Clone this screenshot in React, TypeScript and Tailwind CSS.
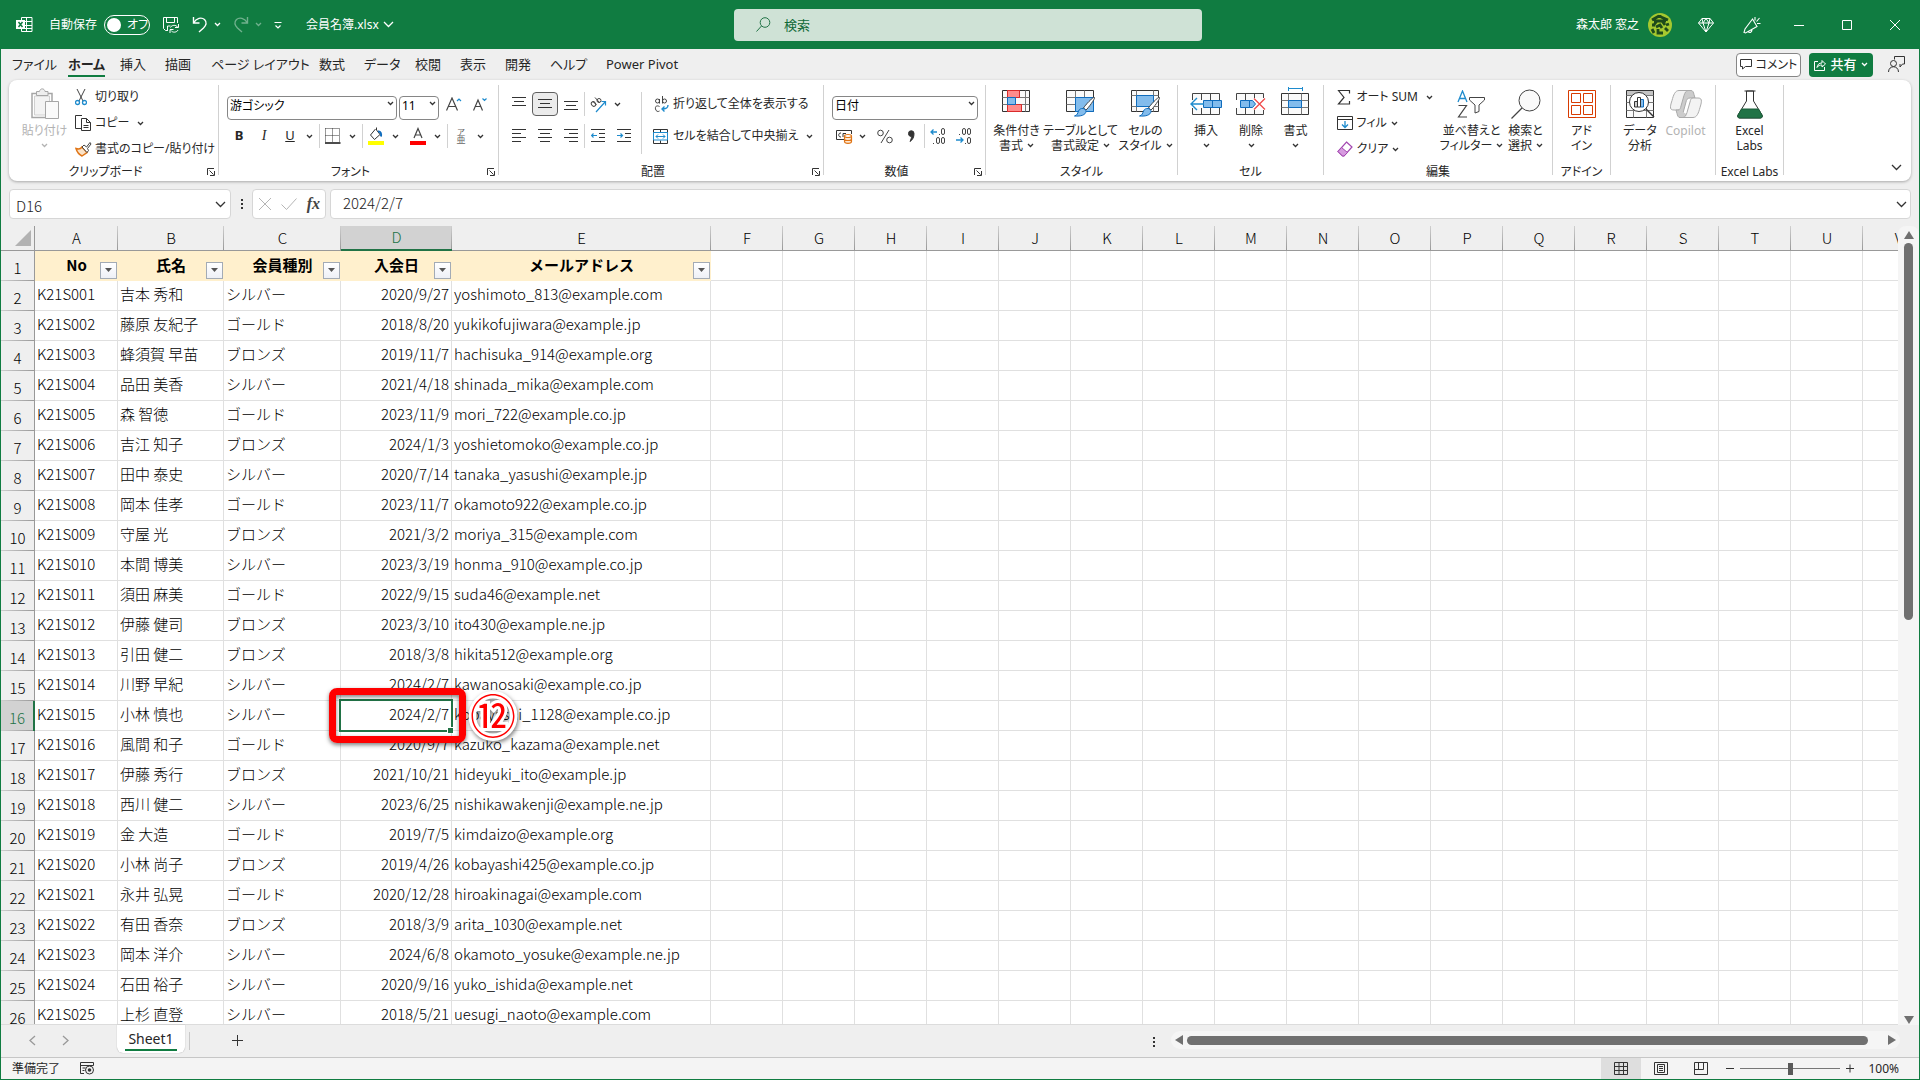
import type { ReactNode } from 'react'
import clsx from 'clsx'

interface Member {
  no: string
  name: string
  rank: string
  date: string
  mail: string
}

const members: Member[] = [
  { no: 'K21S001', name: '吉本 秀和', rank: 'シルバー', date: '2020/9/27', mail: 'yoshimoto_813@example.com' },
  { no: 'K21S002', name: '藤原 友紀子', rank: 'ゴールド', date: '2018/8/20', mail: 'yukikofujiwara@example.jp' },
  { no: 'K21S003', name: '蜂須賀 早苗', rank: 'ブロンズ', date: '2019/11/7', mail: 'hachisuka_914@example.org' },
  { no: 'K21S004', name: '品田 美香', rank: 'シルバー', date: '2021/4/18', mail: 'shinada_mika@example.com' },
  { no: 'K21S005', name: '森 智徳', rank: 'ゴールド', date: '2023/11/9', mail: 'mori_722@example.co.jp' },
  { no: 'K21S006', name: '吉江 知子', rank: 'ブロンズ', date: '2024/1/3', mail: 'yoshietomoko@example.co.jp' },
  { no: 'K21S007', name: '田中 泰史', rank: 'シルバー', date: '2020/7/14', mail: 'tanaka_yasushi@example.jp' },
  { no: 'K21S008', name: '岡本 佳孝', rank: 'ゴールド', date: '2023/11/7', mail: 'okamoto922@example.co.jp' },
  { no: 'K21S009', name: '守屋 光', rank: 'ブロンズ', date: '2021/3/2', mail: 'moriya_315@example.com' },
  { no: 'K21S010', name: '本間 博美', rank: 'シルバー', date: '2023/3/19', mail: 'honma_910@example.co.jp' },
  { no: 'K21S011', name: '須田 麻美', rank: 'ゴールド', date: '2022/9/15', mail: 'suda46@example.net' },
  { no: 'K21S012', name: '伊藤 健司', rank: 'ブロンズ', date: '2023/3/10', mail: 'ito430@example.ne.jp' },
  { no: 'K21S013', name: '引田 健二', rank: 'ブロンズ', date: '2018/3/8', mail: 'hikita512@example.org' },
  { no: 'K21S014', name: '川野 早紀', rank: 'シルバー', date: '2024/2/7', mail: 'kawanosaki@example.co.jp' },
  { no: 'K21S015', name: '小林 慎也', rank: 'シルバー', date: '2024/2/7', mail: 'kobayashi_1128@example.co.jp' },
  { no: 'K21S016', name: '風間 和子', rank: 'ゴールド', date: '2020/9/7', mail: 'kazuko_kazama@example.net' },
  { no: 'K21S017', name: '伊藤 秀行', rank: 'ブロンズ', date: '2021/10/21', mail: 'hideyuki_ito@example.jp' },
  { no: 'K21S018', name: '西川 健二', rank: 'シルバー', date: '2023/6/25', mail: 'nishikawakenji@example.ne.jp' },
  { no: 'K21S019', name: '金 大造', rank: 'ゴールド', date: '2019/7/5', mail: 'kimdaizo@example.org' },
  { no: 'K21S020', name: '小林 尚子', rank: 'ブロンズ', date: '2019/4/26', mail: 'kobayashi425@example.co.jp' },
  { no: 'K21S021', name: '永井 弘晃', rank: 'ゴールド', date: '2020/12/28', mail: 'hiroakinagai@example.com' },
  { no: 'K21S022', name: '有田 香奈', rank: 'ブロンズ', date: '2018/3/9', mail: 'arita_1030@example.net' },
  { no: 'K21S023', name: '岡本 洋介', rank: 'シルバー', date: '2024/6/8', mail: 'okamoto_yosuke@example.ne.jp' },
  { no: 'K21S024', name: '石田 裕子', rank: 'シルバー', date: '2020/9/16', mail: 'yuko_ishida@example.net' },
  { no: 'K21S025', name: '上杉 直登', rank: 'シルバー', date: '2018/5/21', mail: 'uesugi_naoto@example.com' },
]

const headers = ['No', '氏名', '会員種別', '入会日', 'メールアドレス']
const dataColumns = [
  { letter: 'A', width: 'w-[83px]' },
  { letter: 'B', width: 'w-[106px]' },
  { letter: 'C', width: 'w-[117px]' },
  { letter: 'D', width: 'w-[111px]' },
  { letter: 'E', width: 'w-[259px]' },
]
const emptyColumns = 'FGHIJKLMNOPQRSTUV'.split('')

const tabs = [
  { label: 'ファイル', width: 'w-[56px]' },
  { label: 'ホーム', width: 'w-[52px]' },
  { label: '挿入', width: 'w-[45px]' },
  { label: '描画', width: 'w-[46px]' },
  { label: 'ページ レイアウト', width: 'w-[108px]' },
  { label: '数式', width: 'w-[45px]' },
  { label: 'データ', width: 'w-[51px]' },
  { label: '校閲', width: 'w-[45px]' },
  { label: '表示', width: 'w-[45px]' },
  { label: '開発', width: 'w-[45px]' },
  { label: 'ヘルプ', width: 'w-[56px]' },
  { label: 'Power Pivot', width: 'w-[100px]' },
]

const sheetFont = "font-['Noto_Sans_CJK_JP',sans-serif] [font-feature-settings:normal]"

interface SvgProps {
  w: number
  h: number
  className?: string
  children: ReactNode
}

function Svg({ w, h, className, children }: SvgProps) {
  return (
    <svg width={w} height={h} viewBox={`0 0 ${w} ${h}`} fill="none" stroke="#444" className={clsx('shrink-0', className)} aria-hidden="true">
      {children}
    </svg>
  )
}

function Chevron({ color = '#333' }: { color?: string }) {
  return (
    <Svg w={7} h={5}>
      <path d="M1 1l2.5 2.5L6 1" stroke={color} strokeWidth="1.3" />
    </Svg>
  )
}

function WideChevron({ color = '#333' }: { color?: string }) {
  return (
    <Svg w={11} h={7}>
      <path d="M1 1l4.5 4.5L10 1" stroke={color} strokeWidth="1.3" />
    </Svg>
  )
}

function Separator({ tall = false }: { tall?: boolean }) {
  return <span className={clsx('w-px shrink-0 bg-[#d1d1d1]', tall ? 'h-[62px]' : 'h-6')} />
}

function ToolButton({ label, wide = 'w-[26px]', active, children }: { label: string; wide?: string; active?: boolean; children: ReactNode }) {
  return (
    <button
      type="button"
      aria-label={label}
      className={clsx('flex h-6 shrink-0 items-center justify-center', wide, active && 'rounded border border-[#5f5f5f] bg-[#ebebeb]')}
    >
      {children}
    </button>
  )
}

function MenuArrow({ label }: { label: string }) {
  return (
    <ToolButton label={label} wide="w-3">
      <Chevron />
    </ToolButton>
  )
}

function Combo({ label, value, width }: { label: string; value: string; width: string }) {
  return (
    <div className={clsx('relative h-6', width)}>
      <select aria-label={label} className="h-6 w-full appearance-none rounded border border-[#868686] bg-white pb-1 pl-[2px] text-xs text-black">
        <option>{value}</option>
      </select>
      <span className="pointer-events-none absolute top-[9px] right-[3px]">
        <Chevron />
      </span>
    </div>
  )
}

function Group({ title, width, launcher, children }: { title: string; width: string; launcher?: boolean; children: ReactNode }) {
  return (
    <section className={clsx('flex h-[90px] shrink-0 flex-col border-r border-[#d1d1d1]', width)} aria-label={title}>
      <div className="flex h-[79px] shrink-0 justify-center">{children}</div>
      <div className="flex h-4 shrink-0 items-center text-xs leading-4 whitespace-nowrap">
        <span className="flex flex-1 justify-center">{title}</span>
        {launcher && (
          <button type="button" aria-label={`${title}の設定`} className="flex w-4 justify-end pr-[3px]">
            <Svg w={8} h={8}>
              <path d="M.5 7V.5H7M2.500 2.500L6.500 6.500M7.500 3v4.500H3" stroke="#333" />
            </Svg>
          </button>
        )}
      </div>
    </section>
  )
}

function BigButton({ icon, lines, arrow, width, muted }: { icon: ReactNode; lines: string[]; arrow?: boolean; width: string; muted?: boolean }) {
  return (
    <button type="button" className={clsx('flex shrink-0 flex-col items-center text-xs leading-[15px] whitespace-nowrap', width, muted && 'text-[#b3b3b3]')}>
      <span className="flex h-[38px] items-center">{icon}</span>
      {lines.map((line, i) => (
        <span key={line} className="flex items-center gap-1">
          {line}
          {arrow && lines.length > 1 && i === lines.length - 1 && <Chevron />}
        </span>
      ))}
      {arrow && lines.length === 1 && (
        <span className="flex h-[15px] items-center">
          <Chevron color={muted ? '#b3b3b3' : '#333'} />
        </span>
      )}
    </button>
  )
}

function ListButton({ icon, text, arrow, spread }: { icon: ReactNode; text: string; arrow?: boolean; spread?: boolean }) {
  return (
    <button type="button" className="flex h-[26px] items-center whitespace-nowrap">
      <span className="flex w-5 items-center">{icon}</span>
      {text}
      {arrow && (
        <span className={spread ? 'pl-2' : 'pl-1'}>
          <Chevron />
        </span>
      )}
    </button>
  )
}

function LinesIcon({ rows, blueArrow }: { rows: number[][]; blueArrow?: 'left' | 'right' }) {
  return (
    <Svg w={14} h={14}>
      {rows.map(([x1, x2, y]) => (
        <path key={y} d={`M${x1} ${y}.5H${x2}`} stroke="#333" />
      ))}
      {blueArrow === 'left' && <path d="M6 6.500H.5M2.500 4.500l-2 2 2 2" stroke="#1e8bcd" strokeWidth="1.2" />}
      {blueArrow === 'right' && <path d="M0 6.500H5.500M3.500 4.500l2 2-2 2" stroke="#1e8bcd" strokeWidth="1.2" />}
    </Svg>
  )
}

function Brush() {
  return (
    <g>
      <path d="M29.500 8.500c1 .8-6.500 11-8.500 12.500l-2.500-2c1.500-2.500 9.500-11.500 11-10.500z" fill="#fff" stroke="#444" />
      <path d="M18 19.500c1.500 0 3 1.500 3 3-.5 3.500-5 5-11.500 4.500 3-1 3-2.500 4-5 .8-1.800 2.500-2.700 4.500-2.500z" fill="#83bcec" stroke="#0f6cbd" />
    </g>
  )
}

function TableIcon({ children }: { children?: ReactNode }) {
  return (
    <Svg w={32} h={30}>
      <path d="M1.500 1.500h27v21h-27z" fill="#fafafa" stroke="#333" />
      {children}
    </Svg>
  )
}

function TitleBar() {
  return (
    <header className="flex h-[49px] shrink-0 items-center bg-[#107c41] pl-4 text-xs text-white">
      <div className="flex flex-1 items-center">
        <Svg w={17} h={17}>
          <path d="M5.500 1.500h10.500v14H5.500M10.500 1v15M5.500 5.500H16M5.500 9.500H16M5.500 12.500H16M5.500 1.500v14" stroke="#fff" />
          <path d="M0 4h9v9H0z" fill="#fff" stroke="none" />
          <path d="M2.500 6l4 5M6.500 6l-4 5" stroke="#107c41" strokeWidth="1.5" />
        </Svg>
        <label className="ml-4 flex items-center gap-[7px]">
          自動保存
          <input type="checkbox" role="switch" className="sr-only" />
          <span className="flex h-5 w-[46px] items-center rounded-full border border-white">
            <span className="ml-[2px] size-[14px] rounded-full bg-white" />
            <span className="ml-[6px]">オフ</span>
          </span>
        </label>
        <button type="button" aria-label="上書き保存" className="ml-3">
          <Svg w={18} h={18}>
            <path d="M6 14.500H3.500l-2-2v-11h14V7M4.500 1.500v5h8v-5M5.500 14v-4h3" stroke="#fff" />
            <path d="M8.500 11.500c1-2.500 5.500-3 7-.5M16.500 8v3.500H13M16 14c-1 2.500-5.500 3-7 .5M8 17v-3.500h3.500" stroke="#fff" />
          </Svg>
        </button>
        <button type="button" aria-label="元に戻す" className="ml-3 flex items-center gap-[6px]">
          <Svg w={16} h={17}>
            <path d="M1.500 1v6h6M1.500 7c3-5 8-6 11-3.500 3 3 1.500 6-1 8.500L7 16" stroke="#fff" strokeWidth="1.4" />
          </Svg>
          <Chevron color="#fff" />
        </button>
        <button type="button" aria-label="やり直し" disabled className="ml-3 flex items-center gap-[6px] opacity-40">
          <Svg w={16} h={17}>
            <path d="M14.500 1v6h-6M14.500 7c-3-5-8-6-11-3.500-3 3-1.500 6 1 8.500L9 16" stroke="#fff" strokeWidth="1.4" />
          </Svg>
          <Chevron color="#fff" />
        </button>
        <button type="button" aria-label="クイック アクセス ツール バーのカスタマイズ" className="ml-3">
          <Svg w={8} h={8}>
            <path d="M.5 1.500h7M1.500 4.500L4 7l2.500-2.500" stroke="#fff" strokeWidth="1.2" />
          </Svg>
        </button>
        <button type="button" className="ml-6 flex items-center gap-1">
          会員名簿.xlsx
          <WideChevron color="#fff" />
        </button>
      </div>
      <div className="flex h-8 w-[468px] items-center gap-[13px] rounded bg-[#cfe2d6] pl-[22px]">
        <Svg w={15} h={15}>
          <circle cx="9" cy="5.500" r="4.800" stroke="#217346" />
          <path d="M5.500 9L.5 14.500" stroke="#217346" />
        </Svg>
        <input type="text" aria-label="検索" placeholder="検索" className="h-8 flex-1 bg-transparent text-[13px] outline-none placeholder:text-[#0f6a38]" />
      </div>
      <div className="flex flex-1 items-center justify-end">
        <button type="button" className="flex items-center gap-[9px]">
          森太郎 窓之
          <Svg w={24} h={24}>
            <circle cx="12" cy="12" r="12" fill="#a5c82f" stroke="none" />
            <path d="M4 7l7-4M12 2v3M6 8h12M13 4l7 3M9 8l-4 5M14 8l3 4M8 14l4-2 2 3M4 16l2 4M10 16v4h5M17 15l3 3M18 12l3-1M4 12h3" stroke="#1d4a1b" strokeWidth="2.800" />
          </Svg>
        </button>
        <button type="button" aria-label="プレミアム" className="ml-[26px]">
          <Svg w={16} h={16}>
            <path d="M4 1.500h8L15.500 6 8 15 .5 6zM.5 6h15M5 6l3 9 3-9M4 1.500L5 6l3-4.500L11 6l1-4.500" stroke="#fff" />
          </Svg>
        </button>
        <button type="button" aria-label="新機能" className="ml-[29px]">
          <Svg w={18} h={18}>
            <path d="M9.500 3L2 13l-1 3.500 1.500.5L14 10.500zM5 15.500c2 2 4 .5 4-2M12 4.500V1M13.500 5.500L16.500 2M14 7.500h3.500" stroke="#fff" strokeWidth="1.1" />
          </Svg>
        </button>
        <button type="button" aria-label="最小化" className="ml-[14px] flex w-12 justify-center">
          <Svg w={10} h={10}>
            <path d="M0 5.500h10" stroke="#fff" />
          </Svg>
        </button>
        <button type="button" aria-label="最大化" className="flex w-12 justify-center">
          <Svg w={10} h={10}>
            <path d="M.5.5h9v9h-9z" stroke="#fff" />
          </Svg>
        </button>
        <button type="button" aria-label="閉じる" className="mr-px flex w-12 justify-center">
          <Svg w={10} h={10}>
            <path d="M0 0l10 10M10 0L0 10" stroke="#fff" />
          </Svg>
        </button>
      </div>
    </header>
  )
}

function TabRow() {
  return (
    <nav className="flex h-[31px] shrink-0 items-center justify-between pr-[14px] pl-[11px] text-[13px]">
      <div className="flex">
        {tabs.map(tab => (
          <button key={tab.label} type="button" className={clsx('flex shrink-0 whitespace-nowrap', tab.width)}>
            <span className={clsx('border-b-2 leading-[22px]', tab.label === 'ホーム' ? 'border-[#107c41] font-bold' : 'border-transparent')}>{tab.label}</span>
          </button>
        ))}
      </div>
      <div className="flex items-center">
        <button type="button" className="flex h-6 w-[65px] items-center justify-center gap-1 rounded border border-[#868686] bg-white text-xs">
          <Svg w={12} h={11}>
            <path d="M.5.500h11v7h-6l-3 2.500v-2.500h-2z" stroke="#333" />
          </Svg>
          コメント
        </button>
        <button type="button" className="ml-2 flex h-6 w-16 items-center justify-center gap-1 rounded bg-[#107c41] font-medium text-white">
          <Svg w={12} h={12}>
            <path d="M4 2.500H.5v9h10V8M3 8.500c.5-3 2-4.500 5-4.500V1.500L11.500 5 8 8V6c-2 0-4 .5-5 2.500z" stroke="#fff" />
          </Svg>
          共有
          <Chevron color="#fff" />
        </button>
        <button type="button" aria-label="プロフィール" className="ml-[15px]">
          <Svg w={17} h={17}>
            <path d="M6.500 3.500V.5h10v7.500h-2l-2.500 3V8" stroke="#333" />
            <circle cx="5.500" cy="7.500" r="3" stroke="#333" />
            <path d="M.5 16c0-7 10-7 10 0" stroke="#333" />
          </Svg>
        </button>
      </div>
    </nav>
  )
}

function ClipboardGroup() {
  return (
    <Group title="クリップボード" width="w-[210px]" launcher>
      <div className="flex flex-1 gap-2 pl-[13px]">
        <BigButton
          width="w-[45px]"
          lines={['貼り付け']}
          arrow
          muted
          icon={
            <Svg w={28} h={32}>
              <path d="M1 5.500h20v24H1z" fill="#fff" stroke="#a6a6a6" strokeWidth="1.500" />
              <path d="M3.500 8h15v19h-15z" fill="#f3f3f3" stroke="#d0d0d0" />
              <path d="M5.500 7.500v-4h3c.5-3.500 5-3.500 5.500 0h3v4z" fill="#eee" stroke="#a6a6a6" />
              <path d="M14.500 13.500h13v17h-13z" fill="#fafafa" stroke="#a6a6a6" />
            </Svg>
          }
        />
        <div className="-mt-px flex flex-col items-start text-xs">
          <ListButton
            text="切り取り"
            icon={
              <Svg w={12} h={17}>
                <path d="M2 0l6 12M10 0L4 12" stroke="#444" />
                <circle cx="2.500" cy="13.500" r="2" stroke="#1e8bcd" strokeWidth="1.300" />
                <circle cx="9.500" cy="13.500" r="2" stroke="#1e8bcd" strokeWidth="1.300" />
              </Svg>
            }
          />
          <ListButton
            text="コピー"
            arrow
            spread
            icon={
              <Svg w={16} h={16}>
                <path d="M6 13.500H.5v-13H7M6.500 3.500h5l4 4v8h-9zM11.500 3.500v4h4M8.500 10.500h5M8.500 12.500h5" stroke="#333" />
              </Svg>
            }
          />
          <ListButton
            text="書式のコピー/貼り付け"
            icon={
              <Svg w={17} h={16}>
                <path d="M1 7.500c3 1 5 0 6-1.500l5 5.500-5 3.500c-3-1.500-5-4-6-7.500z" fill="#fbe3c8" stroke="#e07516" strokeWidth="1.500" />
                <path d="M7 6l2-2 2.500 2L15 1.500 16 3l-3.500 4.500 1 2-1.500 2z" fill="#fff" stroke="#444" />
              </Svg>
            }
          />
        </div>
      </div>
    </Group>
  )
}

function FontGroup() {
  return (
    <Group title="フォント" width="w-[280px]" launcher>
      <div className="flex flex-1 flex-col gap-2 pt-[7px] pl-2">
        <div className="flex items-center">
          <Combo label="フォント" value="游ゴシック" width="w-[170px]" />
          <span className="w-[2px]" />
          <Combo label="フォント サイズ" value="11" width="w-[40px]" />
          <span className="w-[2px]" />
          <ToolButton label="フォント サイズの拡大">
            <Svg w={17} h={15}>
              <path d="M.5 13.500L6 1l5.500 12.500M2.500 9.500h7" strokeWidth="1.200" />
              <path d="M11 4l2-2 2 2" stroke="#1e8bcd" strokeWidth="1.200" />
            </Svg>
          </ToolButton>
          <ToolButton label="フォント サイズの縮小">
            <Svg w={15} h={15}>
              <path d="M.5 13.500L5 3l4.500 10.500M2 9.500h6" strokeWidth="1.200" />
              <path d="M9.500 1.500l2 2 2-2" stroke="#1e8bcd" strokeWidth="1.200" />
            </Svg>
          </ToolButton>
        </div>
        <div className="flex items-center text-[13px]">
          <ToolButton label="太字" wide="w-6">
            <b>B</b>
          </ToolButton>
          <ToolButton label="斜体">
            <i className="font-['Liberation_Serif',serif] text-sm">I</i>
          </ToolButton>
          <ToolButton label="下線">
            <u>U</u>
          </ToolButton>
          <MenuArrow label="下線の種類" />
          <span className="w-1" />
          <Separator />
          <ToolButton label="罫線">
            <Svg w={16} h={16}>
              <path d="M.5.5h14v14M.5.500v14M7.500.500v14M.5 7.500h14" stroke="#333" strokeDasharray="1 1" />
              <path d="M0 15h15.500" stroke="#111" strokeWidth="1.500" />
            </Svg>
          </ToolButton>
          <MenuArrow label="罫線の種類" />
          <span className="w-1" />
          <Separator />
          <ToolButton label="塗りつぶしの色">
            <Svg w={16} h={18}>
              <path d="M7.500 2L2.500 8l4 4.500 5.500-5-3.500-4.500v-2.500" stroke="#333" />
              <path d="M10 4.500c2.500-.5 3.500 2 3 5" stroke="#0f6cbd" strokeWidth="2" />
              <path d="M0 14h16v4H0z" fill="#ff0" stroke="none" />
            </Svg>
          </ToolButton>
          <MenuArrow label="塗りつぶしの色の選択" />
          <span className="w-1" />
          <ToolButton label="フォントの色">
            <Svg w={16} h={18}>
              <path d="M4 11L8 1.500 12 11M5.500 8h5" strokeWidth="1.200" />
              <path d="M0 14h16v4H0z" fill="#f00" stroke="none" />
            </Svg>
          </ToolButton>
          <MenuArrow label="フォントの色の選択" />
          <span className="w-1" />
          <Separator />
          <ToolButton label="ふりがな">
            <span className="flex flex-col items-center text-[8px] leading-[8px] text-[#666]">
              <span>ア</span>
              <span className="text-[9px]">亜</span>
            </span>
          </ToolButton>
          <MenuArrow label="ふりがなの設定" />
        </div>
      </div>
    </Group>
  )
}

function AlignGroup() {
  return (
    <Group title="配置" width="w-[325px]" launcher>
      <div className="flex flex-1 items-start pt-[7px] pl-[7px] text-xs">
        <div className="flex flex-col gap-2">
          <div className="flex items-center">
            <ToolButton label="上揃え">
              <LinesIcon rows={[[0, 14, 0], [2, 12, 4], [0, 14, 8]]} />
            </ToolButton>
            <ToolButton label="上下中央揃え" active>
              <LinesIcon rows={[[0, 14, 2], [2, 12, 6], [0, 14, 10]]} />
            </ToolButton>
            <ToolButton label="下揃え">
              <LinesIcon rows={[[0, 14, 4], [2, 12, 8], [0, 14, 12]]} />
            </ToolButton>
            <Separator />
            <ToolButton label="方向">
              <Svg w={17} h={17}>
                <ellipse cx="3.500" cy="8" rx="2" ry="2.400" transform="rotate(-40 3.500 8)" />
                <path d="M3 5.500l3.500 3.500M5 1.500l4.500 5" />
                <circle cx="9" cy="4.500" r="2" />
                <path d="M6 16l9.500-10.500M11.500 5.500h4v4" stroke="#1e8bcd" strokeWidth="1.200" />
              </Svg>
            </ToolButton>
            <MenuArrow label="方向の種類" />
          </div>
          <div className="flex items-center">
            <ToolButton label="左揃え">
              <LinesIcon rows={[[0, 14, 0], [0, 9, 4], [0, 14, 8], [0, 9, 12]]} />
            </ToolButton>
            <ToolButton label="中央揃え">
              <LinesIcon rows={[[0, 14, 0], [2, 12, 4], [0, 14, 8], [2, 12, 12]]} />
            </ToolButton>
            <ToolButton label="右揃え">
              <LinesIcon rows={[[0, 14, 0], [5, 14, 4], [0, 14, 8], [5, 14, 12]]} />
            </ToolButton>
            <Separator />
            <ToolButton label="インデントを減らす">
              <LinesIcon rows={[[0, 14, 0], [8, 14, 4], [8, 14, 8], [0, 14, 12]]} blueArrow="left" />
            </ToolButton>
            <ToolButton label="インデントを増やす">
              <LinesIcon rows={[[0, 14, 0], [8, 14, 4], [8, 14, 8], [0, 14, 12]]} blueArrow="right" />
            </ToolButton>
          </div>
        </div>
        <span className="w-1" />
        <Separator tall />
        <div className="-mt-px flex flex-col gap-[6px] pl-[11px]">
          <ListButton
            text="折り返して全体を表示する"
            icon={
              <Svg w={17} h={17}>
                <circle cx="4.500" cy="5" r="2" />
                <path d="M6.500 3v4.500M9.500 0v7.500" />
                <circle cx="11.500" cy="5" r="2" />
                <path d="M6.500 10.500c-3-1.500-4.500 0-4 2.500.5 2.500 2.500 3 4 2" />
                <path d="M15 9c0 3-1.500 4-6 4M11.500 10.500L9 13l2.500 2.500" stroke="#1e8bcd" strokeWidth="1.400" />
              </Svg>
            }
          />
          <ListButton
            text="セルを結合して中央揃え"
            arrow
            spread
            icon={
              <Svg w={15} h={15}>
                <path d="M.5.500h14v14H.5zM7.500.500v3M7.500 11.500v3" stroke="#333" />
                <path d="M.5 3.500h14v7.500H.5z" fill="#fff" stroke="#1e8bcd" />
                <path d="M3 7.500h9M5 5.500l-2 2 2 2M10 5.500l2 2-2 2" stroke="#1e8bcd" />
              </Svg>
            }
          />
        </div>
      </div>
    </Group>
  )
}

function NumberGroup() {
  return (
    <Group title="数値" width="w-[162px]" launcher>
      <div className="flex flex-1 flex-col gap-2 pt-[7px] pl-2">
        <Combo label="表示形式" value="日付" width="w-[146px]" />
        <div className="flex items-center">
          <ToolButton label="通貨表示形式" wide="w-6">
            <Svg w={17} h={15}>
              <path d="M8 10.500H.5v-9h15V5M5 4c-3-.5-3 4.500 0 4M7 8V4.500h3" stroke="#333" />
              <path d="M8.500 7.500v5c0 2.500 7 2.500 7 0v-5M8.500 10c0 2 7 2 7 0" stroke="#e07516" strokeWidth="1.200" fill="#fde8d3" />
              <ellipse cx="12" cy="7" rx="3.500" ry="1.500" fill="#fff" stroke="#e07516" strokeWidth="1.200" />
            </Svg>
          </ToolButton>
          <MenuArrow label="通貨の種類" />
          <span className="w-1" />
          <ToolButton label="パーセント スタイル">
            <Svg w={16} h={15}>
              <circle cx="3.500" cy="4" r="2.800" />
              <circle cx="12.500" cy="11" r="2.800" />
              <path d="M12 1L4 14" />
            </Svg>
          </ToolButton>
          <ToolButton label="桁区切りスタイル">
            <Svg w={9} h={13}>
              <path d="M1.500 3.500a2.700 2.700 0 015.500 0c0 3.500-1 6-4 8 1-2 1.500-3.500 1.500-5a2.700 2.700 0 01-3-3z" fill="#333" stroke="#333" />
            </Svg>
          </ToolButton>
          <Separator />
          <ToolButton label="小数点以下の表示桁数を増やす">
            <Svg w={16} h={16}>
              <path d="M7 4H1M3.500 1.500L1 4l2.500 2.500" stroke="#1e8bcd" strokeWidth="1.300" />
              <rect x="11.500" y=".5" width="3" height="6" rx="1.500" />
              <rect x="6.500" y="9.500" width="3" height="6" rx="1.500" />
              <rect x="11.500" y="9.500" width="3" height="6" rx="1.500" />
              <path d="M9.500 6v1M3.500 15v1" />
            </Svg>
          </ToolButton>
          <ToolButton label="小数点以下の表示桁数を減らす">
            <Svg w={16} h={16}>
              <path d="M0 12h7M4.500 9.500L7 12l-2.500 2.500" stroke="#1e8bcd" strokeWidth="1.300" />
              <rect x="6.500" y=".5" width="3" height="6" rx="1.500" />
              <rect x="11.500" y=".5" width="3" height="6" rx="1.500" />
              <rect x="11.500" y="9.500" width="3" height="6" rx="1.500" />
              <path d="M3.500 6v1M9.500 15v1" />
            </Svg>
          </ToolButton>
        </div>
      </div>
    </Group>
  )
}

function StyleGroup() {
  return (
    <Group title="スタイル" width="w-[192px]">
      <BigButton
        width="w-[52px]"
        lines={['条件付き', '書式']}
        arrow
        icon={
          <TableIcon>
            <path d="M1.500 8.500h27M1.500 15.500h27M6.500 1.500v21M24.500 1.500v21" stroke="#777" />
            <path d="M6.500 1.500h12v7h-12zM6.500 15.500h14v7h-14z" fill="#ff8c8c" stroke="#d92b2b" />
            <path d="M6.500 8.500h8v7h-8z" fill="#83bcec" stroke="#0f6cbd" />
          </TableIcon>
        }
      />
      <BigButton
        width="w-[76px]"
        lines={['テーブルとして', '書式設定']}
        arrow
        icon={
          <TableIcon>
            <path d="M1.500 8.500h27M1.500 15.500h27M10.500 1.500v21M19.500 1.500v21" stroke="#777" />
            <path d="M10.500 8.500h18v14h-18z" fill="#83bcec" stroke="#0f6cbd" />
            <Brush />
          </TableIcon>
        }
      />
      <BigButton
        width="w-[54px]"
        lines={['セルの', 'スタイル']}
        arrow
        icon={
          <TableIcon>
            <path d="M1.500 6.500h27M1.500 17.500h27M6.500 1.500v21M23.500 1.500v21" stroke="#777" />
            <path d="M6.500 6.500h17v11h-17z" fill="#83bcec" stroke="#0f6cbd" />
            <Brush />
          </TableIcon>
        }
      />
    </Group>
  )
}

function CellGroup() {
  return (
    <Group title="セル" width="w-[146px]">
      <BigButton
        width="w-[45px]"
        lines={['挿入']}
        arrow
        icon={
          <Svg w={33} h={24}>
            <path d="M2.500 1.500h27v21h-27zM11.500 1.500v21M20.500 1.500v21" fill="#fafafa" stroke="#444" />
            <path d="M0 8h14v8H0z" fill="#fff" stroke="none" />
            <path d="M13.500 8.500h18v7h-18zM22.500 8.500v7" fill="#83bcec" stroke="#0f6cbd" />
            <path d="M14 12H1M7 6l-6 6 6 6" stroke="#1e8bcd" strokeWidth="1.400" />
          </Svg>
        }
      />
      <BigButton
        width="w-[45px]"
        lines={['削除']}
        arrow
        icon={
          <Svg w={32} h={24}>
            <path d="M1.500 1.500h27v21h-27zM10.500 1.500v21M19.500 1.500v21" fill="#fafafa" stroke="#444" />
            <path d="M0 8h5v8H0zM19 6h13v12H19z" fill="#fff" stroke="none" />
            <path d="M5.500 8.500h9v7h-9zM14.500 8.500h3l3 3.500-3 3.500h-3z" fill="#83bcec" stroke="#0f6cbd" />
            <path d="M19 6.500l11 11M30 6.500l-11 11" stroke="#f04a4a" strokeWidth="1.300" />
          </Svg>
        }
      />
      <BigButton
        width="w-[44px]"
        lines={['書式']}
        arrow
        icon={
          <Svg w={29} h={34}>
            <path d="M7 1.500h15M7.500 0v4M21.500 0v4" stroke="#1e8bcd" />
            <path d="M.5 6.500h27v21H.5z" fill="#fafafa" stroke="#333" />
            <path d="M.5 13.500h27M.5 20.500h27M7.500 6.500v21M20.500 6.500v21" stroke="#777" />
            <path d="M7.500 13.500h13v7h-13z" fill="#83bcec" stroke="#0f6cbd" />
          </Svg>
        }
      />
    </Group>
  )
}

function EditGroup() {
  return (
    <Group title="編集" width="w-[229px]">
      <div className="-mt-px flex w-[117px] flex-col pl-[11px] text-xs">
        <ListButton
          text="オート SUM"
          arrow
          spread
          icon={
            <Svg w={14} h={15}>
              <path d="M12.500 3.500v-3H1.500L7 7.500l-5.500 6.500h11v-3" stroke="#333" strokeWidth="1.200" />
            </Svg>
          }
        />
        <ListButton
          text="フィル"
          arrow
          icon={
            <Svg w={16} h={14}>
              <path d="M.5.500h15v13H.5zM.5 3.500h15" stroke="#333" />
              <path d="M8 5v6.500M5 8.500l3 3 3-3" stroke="#1e8bcd" strokeWidth="1.300" />
            </Svg>
          }
        />
        <ListButton
          text="クリア"
          arrow
          icon={
            <Svg w={16} h={16}>
              <path d="M9.500 1l5.500 5-8 9H5.500L1 10.500z" fill="#fff" stroke="#a347b0" strokeWidth="1.200" />
              <path d="M4.500 6.500l6 5L7 15H5.500L1 10.500z" fill="#d79be0" stroke="#a347b0" />
            </Svg>
          }
        />
      </div>
      <BigButton
        width="w-[58px]"
        lines={['並べ替えと', 'フィルター']}
        arrow
        icon={
          <Svg w={30} h={28}>
            <path d="M1 12L5.500 1 10 12M2.500 8.500h6" stroke="#1e8bcd" strokeWidth="1.300" />
            <path d="M1.500 15.500h8L1.500 27h8.500" stroke="#444" strokeWidth="1.200" />
            <path d="M12.500 7.500h15v2.500l-5.500 5v6.500l-4 1.500v-8l-5.500-5z" />
          </Svg>
        }
      />
      <BigButton
        width="w-[50px]"
        lines={['検索と', '選択']}
        arrow
        icon={
          <Svg w={30} h={30}>
            <circle cx="18.500" cy="11.500" r="10.500" fill="#fafafa" />
            <path d="M11 19L.5 29.500" strokeWidth="1.200" />
          </Svg>
        }
      />
    </Group>
  )
}

function Ribbon() {
  return (
    <div className="mx-2 flex h-[101px] shrink-0 items-start justify-between rounded-lg bg-white pt-[5px] shadow-[0_1px_3px_rgba(0,0,0,0.3)]">
      <div className="flex">
        <ClipboardGroup />
        <FontGroup />
        <AlignGroup />
        <NumberGroup />
        <StyleGroup />
        <CellGroup />
        <EditGroup />
        <Group title="アドイン" width="w-[58px]">
          <BigButton
            width="w-[50px]"
            lines={['アド', 'イン']}
            icon={
              <Svg w={28} h={28}>
                <path d="M.5.500h27v27H.5zM3.500 3.500h9v9h-9zM15.500 3.500h9v9h-9zM3.500 15.500h9v9h-9zM15.500 15.500h9v9h-9z" stroke="#d83b01" />
              </Svg>
            }
          />
        </Group>
        <Group title="" width="w-[105px]">
          <BigButton
            width="w-[45px]"
            lines={['データ', '分析']}
            icon={
              <Svg w={29} h={29}>
                <path d="M.5.500h27v27H.5z" fill="#fafafa" stroke="#333" />
                <path d="M1 1h26v4H1z" fill="#c4c4c4" stroke="none" />
                <path d="M.5 5.500h27M.5 12.500h27M.5 20.500h27M7.500 5.500v22M20.500 5.500v22" stroke="#777" />
                <circle cx="13" cy="12" r="9.500" fill="#fff" stroke="#333" />
                <path d="M20 19l8 8" stroke="#333" strokeWidth="1.500" />
                <path d="M8.500 11.500h3V17h-3z" fill="#ccc" stroke="#333" />
                <path d="M14.500 9.500h3V17h-3z" fill="#83bcec" stroke="#0f6cbd" />
                <path d="M11.500 7.500h3V17h-3z" fill="#fff" stroke="#333" />
              </Svg>
            }
          />
          <BigButton
            width="w-[46px]"
            lines={['Copilot']}
            muted
            icon={
              <Svg w={32} h={28}>
                <path d="M9 .5h12c2 0 2.500 2 3 4l1 3.500h-5c-3 0-3.500 2-4 4l-3 11c-1 3-2 4.500-4 4.500" fill="#ccc" stroke="#aaa" />
                <path d="M9 .5C5 .5 3.500 5 2 10.500-.500 18 0 20 4 20h4c2 0 2.500-2 3-4l3-10.500c1-3 2-5 4-5z" fill="#f3f3f3" stroke="#aaa" />
                <path d="M23 27.500H10c-2 0-2.500-2-3-4L6 20h3" fill="#ccc" stroke="#aaa" />
                <path d="M23 27.500c4 0 5.500-4.500 7-10C32.500 10 31.500 8 28 8h-5c-2 0-2.500 2-3 4l-3 10.500c-1 3-2 5-4 5z" fill="#f3f3f3" stroke="#aaa" />
              </Svg>
            }
          />
        </Group>
        <Group title="Excel Labs" width="w-[68px]">
          <BigButton
            width="w-[50px]"
            lines={['Excel', 'Labs']}
            icon={
              <Svg w={26} h={29}>
                <path d="M9.500 1v10L1 25c-.8 1.500 0 3 1.500 3h21c1.500 0 2.300-1.500 1.500-3L16.500 11V1z" fill="#fff" stroke="#333" />
                <path d="M4.500 19h17l3.500 6c.8 1.500 0 3-1.500 3h-21C1 28 .2 26.500 1 25z" fill="#217346" stroke="#1d5d3a" />
                <path d="M7.500 1h11" stroke="#333" />
              </Svg>
            }
          />
        </Group>
      </div>
      <button type="button" aria-label="リボンの表示オプション" className="mt-[79px] mr-[9px]">
        <WideChevron />
      </button>
    </div>
  )
}

function FormulaBar() {
  return (
    <div className="flex shrink-0 items-center px-2 pt-2 pb-[7px]">
      <div className="flex h-[30px] w-[222px] items-center rounded border border-[#d6d6d6] bg-white pr-1">
        <input aria-label="名前ボックス" defaultValue="D16" className={clsx('w-0 flex-1 bg-transparent pt-1 pl-[6px] text-[15px] font-light text-[#222] outline-none', sheetFont)} />
        <button type="button" aria-label="名前の一覧">
          <WideChevron />
        </button>
      </div>
      <div className="flex w-[21px] flex-col items-center gap-[2px]">
        <span className="size-[2px] bg-[#333]" />
        <span className="size-[2px] bg-[#333]" />
        <span className="size-[2px] bg-[#333]" />
      </div>
      <div className="flex h-[30px] w-[74px] items-center justify-between rounded border border-[#d6d6d6] bg-white px-[5px]">
        <button type="button" aria-label="キャンセル">
          <Svg w={14} h={14}>
            <path d="M1 1l12 12M13 1L1 13" stroke="#b5b5b5" />
          </Svg>
        </button>
        <button type="button" aria-label="入力">
          <Svg w={16} h={12}>
            <path d="M.5 6.500l5 5L15.500.500" stroke="#b5b5b5" />
          </Svg>
        </button>
        <button type="button" aria-label="関数の挿入" className="font-['Liberation_Serif',serif] text-base leading-5 font-bold text-[#444] italic">
          fx
        </button>
      </div>
      <div className="ml-1 flex h-[30px] flex-1 items-center rounded border border-[#d6d6d6] bg-white pr-[3px]">
        <input aria-label="数式バー" defaultValue="2024/2/7" className={clsx('flex-1 bg-transparent pb-[2px] pl-3 text-[15px] font-light text-[#222] outline-none', sheetFont)} />
        <button type="button" aria-label="数式バーの展開">
          <WideChevron />
        </button>
      </div>
    </div>
  )
}

function FilterButton({ column }: { column: string }) {
  return (
    <button
      type="button"
      aria-label={`${column}のフィルター`}
      className="absolute right-px bottom-[2px] flex size-[17px] items-center justify-center border border-[#a3abb5] bg-linear-to-b from-white to-[#eef0f6]"
    >
      <Svg w={7} h={4}>
        <path d="M0 0h7L3.500 4z" fill="#555" stroke="none" />
      </Svg>
    </button>
  )
}

// Selected cell frame with the red step marker drawn over it
function SelectionMark() {
  return (
    <>
      <span className="pointer-events-none absolute -top-[2px] -right-[2px] -bottom-[2px] -left-[2px] z-10 border-2 border-[#217346]" />
      <span className="pointer-events-none absolute -right-[2px] -bottom-[3px] z-10 size-[6px] border-t border-l border-white bg-[#217346]" />
      <span className="pointer-events-none absolute -top-[13px] -right-[15px] -bottom-[13px] -left-[12px] z-20 rounded-lg border-[7px] border-[#f00] shadow-[0_2px_4px_rgba(0,0,0,0.5),inset_0_2px_4px_rgba(0,0,0,0.5)]" />
      <span className="pointer-events-none absolute top-3 left-full z-20 -translate-y-1/2 pl-[19px] text-[46px] leading-[46px] font-normal text-[#f00] [paint-order:stroke] drop-shadow-[1px_2px_2px_rgba(0,0,0,0.5)] [-webkit-text-stroke:6px_white]">
        ⑫
      </span>
    </>
  )
}

const colHead = 'relative h-6 p-0 text-center font-light'
const colHeadIdle = 'border-b border-[#999] bg-[#efefef]'
const rowHead = 'relative h-[30px] p-0 pt-1 text-center leading-[22px] font-light'
const cell = 'relative h-[30px] border-r border-b border-[#e0e0e0] px-[2px] py-0 leading-[26px] whitespace-nowrap align-top'

function Sheet() {
  return (
    <div className={clsx('min-h-0 min-w-0 flex-1 overflow-hidden border-b border-[#dcdcdc] bg-white', sheetFont)}>
      <table className="w-max table-fixed border-separate border-spacing-0 text-[15px] font-light text-black">
        <thead>
          <tr>
            <th className={clsx(colHead, colHeadIdle, 'w-[34px] border-r')} aria-label="すべて選択">
              <Svg w={16} h={16} className="ml-[14px]">
                <path d="M16 0v16H0z" fill="#b2b2b2" stroke="none" />
              </Svg>
            </th>
            {dataColumns.map(({ letter, width }) => (
              <th key={letter} scope="col" className={clsx(colHead, width, letter === 'D' ? 'border-b-2 border-[#217346] bg-[#d2d2d2] text-[#217346]' : colHeadIdle)}>
                {letter}
                <span className="absolute top-0 right-0 h-full w-px bg-linear-to-b from-[#cfcfcf] to-[#999]" />
              </th>
            ))}
            {emptyColumns.map(letter => (
              <th key={letter} scope="col" className={clsx(colHead, colHeadIdle, 'w-[72px]')}>
                {letter}
                <span className="absolute top-0 right-0 h-full w-px bg-linear-to-b from-[#cfcfcf] to-[#999]" />
              </th>
            ))}
          </tr>
        </thead>
        <tbody>
          <tr>
            <th scope="row" className={clsx(rowHead, 'border-r border-[#999] bg-[#efefef]')}>
              1
              <span className="absolute bottom-0 left-0 h-px w-full bg-linear-to-r from-[#cfcfcf] to-[#999]" />
            </th>
            {headers.map(header => (
              <td key={header} className="relative h-[30px] bg-[#fff0cd] p-0 text-center align-top leading-[28px] font-bold">
                {header}
                <FilterButton column={header} />
              </td>
            ))}
            {emptyColumns.map(letter => (
              <td key={letter} className={cell} />
            ))}
          </tr>
          {members.map((member, i) => {
            const selected = member.no === 'K21S015'
            return (
              <tr key={member.no}>
                <th scope="row" className={clsx(rowHead, selected ? 'border-r-2 border-[#217346] bg-[#d2d2d2] text-[#217346]' : 'border-r border-[#999] bg-[#efefef]')}>
                  {i + 2}
                  <span className="absolute bottom-0 left-0 h-px w-full bg-linear-to-r from-[#cfcfcf] to-[#999]" />
                </th>
                <td className={cell}>{member.no}</td>
                <td className={cell}>{member.name}</td>
                <td className={cell}>{member.rank}</td>
                <td className={clsx(cell, 'text-right')}>
                  {member.date}
                  {selected && <SelectionMark />}
                </td>
                <td className={cell}>{member.mail}</td>
                {emptyColumns.map(letter => (
                  <td key={letter} className={cell} />
                ))}
              </tr>
            )
          })}
        </tbody>
      </table>
    </div>
  )
}

function VerticalScroll() {
  return (
    <div className="flex w-[21px] shrink-0 flex-col items-center rounded-t-lg bg-[#f5f5f5] pt-[5px] pb-px">
      <Svg w={10} h={8}>
        <path d="M5 0l5 8H0z" fill="#707070" stroke="none" />
      </Svg>
      <div className="flex w-full flex-1 justify-center py-1">
        <span className="h-[49%] w-[9px] rounded-full bg-[#707070]" />
      </div>
      <Svg w={10} h={8}>
        <path d="M0 0h10L5 8z" fill="#707070" stroke="none" />
      </Svg>
    </div>
  )
}

function SheetTabs() {
  return (
    <div className="flex h-8 shrink-0 items-start">
      <button type="button" aria-label="前のシート" className="mt-[10px] ml-7">
        <Svg w={7} h={11}>
          <path d="M6 1L1 5.500 6 10" stroke="#999" strokeWidth="1.300" />
        </Svg>
      </button>
      <button type="button" aria-label="次のシート" className="mt-[10px] ml-[26px]">
        <Svg w={7} h={11}>
          <path d="M1 1l5 4.500L1 10" stroke="#999" strokeWidth="1.300" />
        </Svg>
      </button>
      <button type="button" className="ml-12 flex h-7 w-[68px] justify-center rounded-b-md bg-white text-sm shadow-[0_0_1px_rgba(0,0,0,0.4)]">
        <span className="h-[26px] w-[52px] border-b-2 border-[#107c41] leading-7">Sheet1</span>
      </button>
      <span className="mt-[7px] ml-1 h-[18px] w-px bg-[#c8c8c8]" />
      <button type="button" aria-label="新しいシート" className="mt-[10px] ml-[42px]">
        <Svg w={11} h={11}>
          <path d="M5.500 0v11M0 5.500h11" stroke="#333" />
        </Svg>
      </button>
      <div className="flex-1" />
      <div className="mt-3 mr-4 flex flex-col gap-[2px]">
        <span className="size-[2px] bg-[#333]" />
        <span className="size-[2px] bg-[#333]" />
        <span className="size-[2px] bg-[#333]" />
      </div>
      <div className="mt-[6px] mr-[19px] flex h-[18px] w-[38%] items-center rounded-full bg-[#f5f5f5] px-1">
        <Svg w={8} h={10}>
          <path d="M8 0v10L0 5z" fill="#707070" stroke="none" />
        </Svg>
        <div className="flex-1 pr-5 pl-1">
          <span className="block h-[9px] rounded-full bg-[#707070]" />
        </div>
        <Svg w={8} h={10}>
          <path d="M0 0v10l8-5z" fill="#707070" stroke="none" />
        </Svg>
      </div>
    </div>
  )
}

function StatusBar() {
  return (
    <footer className="flex h-[22px] shrink-0 items-center border-t border-[#c6c6c6] bg-[#f4f4f4] text-xs">
      <span className="ml-[11px]">準備完了</span>
      <button type="button" aria-label="マクロの記録" className="ml-5">
        <Svg w={15} h={13}>
          <path d="M4 11.500H.5v-11h13v3M.5 3.500h13M2.500 6h3M2.500 8.500h2" stroke="#333" />
          <circle cx="9.500" cy="8" r="4" stroke="#333" />
          <circle cx="9.500" cy="8" r="1.800" fill="#333" stroke="none" />
        </Svg>
      </button>
      <div className="flex-1" />
      <button type="button" aria-label="標準" className="flex h-[21px] w-10 items-center justify-center bg-[#dedede]">
        <Svg w={14} h={13}>
          <path d="M.5.500h13v12H.5zM5 .5v12M9.500.500v12M.5 4.500h13M.5 8.500h13" stroke="#333" />
        </Svg>
      </button>
      <button type="button" aria-label="ページ レイアウト" className="flex w-10 justify-center">
        <Svg w={14} h={13}>
          <path d="M.5.500h13v12H.5zM3.500 2.500h7v8h-7zM5 4.500h4M5 6.500h4M5 8.500h4" stroke="#333" />
        </Svg>
      </button>
      <button type="button" aria-label="改ページ プレビュー" className="flex w-10 justify-center">
        <Svg w={14} h={13}>
          <path d="M.5.500h13v12H.5zM.5 7.500h9M4.500.500v7M9.500.500v7" stroke="#333" />
        </Svg>
      </button>
      <button type="button" aria-label="縮小" className="ml-[5px]">
        <Svg w={8} h={9}>
          <path d="M0 4.500h8" stroke="#333" />
        </Svg>
      </button>
      <input
        type="range"
        aria-label="ズーム"
        min={10}
        max={190}
        defaultValue={100}
        className="mx-[6px] h-3 w-[100px] appearance-none bg-[linear-gradient(#777,#777)] bg-[length:100%_1px] bg-center bg-no-repeat [&::-webkit-slider-thumb]:h-3 [&::-webkit-slider-thumb]:w-[5px] [&::-webkit-slider-thumb]:appearance-none [&::-webkit-slider-thumb]:bg-[#5a5a5a]"
      />
      <button type="button" aria-label="拡大">
        <Svg w={8} h={9}>
          <path d="M0 4.500h8M4 .5v8" stroke="#333" />
        </Svg>
      </button>
      <button type="button" className="mr-5 ml-[14px]">
        100%
      </button>
    </footer>
  )
}

export default function App() {
  return (
    <div className="flex h-screen flex-col overflow-hidden bg-[#efefef] font-['Noto_Sans','Noto_Sans_CJK_JP',sans-serif] text-[#262626] [font-feature-settings:'palt']">
      <TitleBar />
      <div className="flex min-h-0 flex-1 flex-col border-x border-b border-[#107c41]">
        <TabRow />
        <Ribbon />
        <FormulaBar />
        <main className="flex min-h-0 flex-1">
          <Sheet />
          <VerticalScroll />
        </main>
        <SheetTabs />
        <StatusBar />
      </div>
    </div>
  )
}
